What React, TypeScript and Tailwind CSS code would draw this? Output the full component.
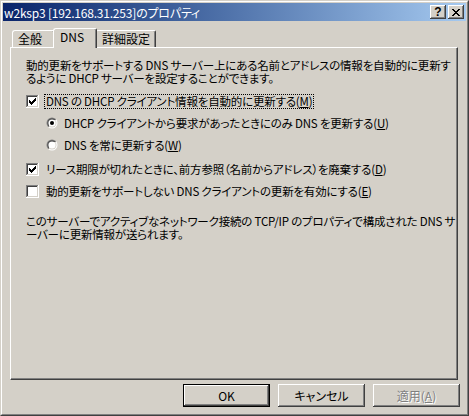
const raised =
  "shadow-[inset_-1px_-1px_#404040,inset_1px_1px_#ffffff,inset_-2px_-2px_#808080,inset_2px_2px_#d4d0c8]";

function CheckBox({ checked }: { checked?: boolean }) {
  const px = [
    [6, 0], [5, 1], [6, 1], [0, 2], [4, 2], [5, 2], [6, 2],
    [0, 3], [1, 3], [3, 3], [4, 3], [5, 3], [0, 4], [1, 4], [2, 4], [3, 4], [4, 4],
    [1, 5], [2, 5], [3, 5], [2, 6],
  ];
  return (
    <svg width="13" height="13" shapeRendering="crispEdges" className="shrink-0">
      <rect x="0" y="0" width="13" height="13" fill="#ffffff" />
      <rect x="0" y="0" width="12" height="1" fill="#808080" />
      <rect x="0" y="0" width="1" height="12" fill="#808080" />
      <rect x="1" y="1" width="10" height="1" fill="#404040" />
      <rect x="1" y="1" width="1" height="10" fill="#404040" />
      <rect x="1" y="11" width="11" height="1" fill="#d4d0c8" />
      <rect x="11" y="1" width="1" height="11" fill="#d4d0c8" />
      {checked && px.map(([x, y]) => <rect key={`${x}-${y}`} x={x + 3} y={y + 3} width="1" height="1" fill="#000" />)}
    </svg>
  );
}

function Radio({ checked, id }: { checked?: boolean; id: string }) {
  return (
    <svg width="12" height="12" className="shrink-0">
      <defs>
        <linearGradient id={`o${id}`} x1="0" y1="0" x2="1" y2="1">
          <stop offset="50%" stopColor="#808080" />
          <stop offset="50%" stopColor="#ffffff" />
        </linearGradient>
        <linearGradient id={`i${id}`} x1="0" y1="0" x2="1" y2="1">
          <stop offset="50%" stopColor="#404040" />
          <stop offset="50%" stopColor="#d4d0c8" />
        </linearGradient>
      </defs>
      <circle cx="6" cy="6" r="5.5" fill={`url(#o${id})`} />
      <circle cx="6" cy="6" r="4.5" fill={`url(#i${id})`} />
      <circle cx="6" cy="6" r="3.6" fill="#ffffff" />
      {checked && <circle cx="6" cy="6" r="2" fill="#000" />}
    </svg>
  );
}

function Btn({ children, def, disabled }: { children: React.ReactNode; def?: boolean; disabled?: boolean }) {
  return (
    <div className={`w-[87px] h-[23px] ${def ? "border border-black" : ""}`}>
      <div
        className={`w-full h-full flex items-center justify-center ${raised} ${
          disabled ? "text-[#808080] [text-shadow:1px_1px_0_#ffffff]" : "text-black"
        }`}
      >
        {children}
      </div>
    </div>
  );
}

export default function App() {
  return (
    <div className="w-[469px] h-[416px] bg-[#d4d0c8] font-['Noto_Sans_CJK_JP',sans-serif] text-[12px] leading-[13px] [font-feature-settings:'palt'] text-black border border-t-[#d4d0c8] border-l-[#d4d0c8] border-r-[#404040] border-b-[#404040]">
      <div className="w-full h-full border border-t-white border-l-white border-r-[#808080] border-b-[#808080] p-px flex flex-col">
        {/* title bar */}
        <div className="h-[18px] flex items-center bg-linear-to-r from-[#0a246a] to-[#a6caf0] pl-[1px] pr-[2px]">
          <span className="text-white whitespace-nowrap flex-1 tracking-[-0.2px]">w2ksp3 [192.168.31.253]のプロパティ</span>
          <div className={`w-[16px] h-[14px] bg-[#d4d0c8] ${raised} flex items-center justify-center text-[12px] font-bold font-['Liberation_Sans',sans-serif] leading-none`}>
            ?
          </div>
          <div className={`ml-[2px] w-[16px] h-[14px] bg-[#d4d0c8] ${raised} flex items-center justify-center`}>
            <svg width="8" height="7" shapeRendering="crispEdges">
              <path d="M0 0h2v1h-2zM6 0h2v1h-2zM1 1h2v1h-2zM5 1h2v1h-2zM2 2h4v1h-4zM3 3h2v1h-2zM2 4h4v1h-4zM1 5h2v1h-2zM5 5h2v1h-2zM0 6h2v1h-2zM6 6h2v1h-2z" fill="#000" />
            </svg>
          </div>
        </div>

        {/* tabs */}
        <div className="flex items-end h-[19px] mt-[7px] ml-[9px]">
          <div className="w-[43px] h-[17px] border-t border-l border-white border-r border-r-[#404040] rounded-tl-[3px] rounded-tr-[2px] shadow-[inset_-1px_0_#808080] pl-[5px] pt-[1px] whitespace-nowrap">
            全般
          </div>
          <div className="relative z-10 -mx-[2px] -mb-px w-[44px] h-[20px] bg-[#d4d0c8] border-t border-l border-white border-r border-r-[#404040] rounded-tl-[3px] rounded-tr-[2px] shadow-[inset_-1px_0_#808080] pl-[6px] pt-[1px] whitespace-nowrap">
            DNS
          </div>
          <div className="w-[61px] h-[17px] border-t border-l border-white border-r border-r-[#404040] rounded-tl-[3px] rounded-tr-[2px] shadow-[inset_-1px_0_#808080] pl-[6px] pt-[1px] whitespace-nowrap">
            詳細設定
          </div>
        </div>

        {/* panel */}
        <div className="ml-[7px] w-[448px] h-[333px] border border-t-white border-l-white border-r-[#404040] border-b-[#404040] shadow-[inset_-1px_-1px_#808080] pl-[15px] pt-[11px] flex flex-col whitespace-nowrap text-[11.5px] tracking-[-0.2px]">
          <p>
            動的更新をサポートする DNS サーバー上にある名前とアドレスの情報を自動的に更新す
            <br />
            るように DHCP サーバーを設定することができます。
          </p>

          <div className="mt-[8px] h-[16px] flex items-center">
            <CheckBox checked />
            <span className="ml-[5px] border border-dotted border-black px-px leading-[13px]">
              DNS の DHCP クライアント情報を自動的に更新する(<u>M</u>)
            </span>
          </div>

          <div className="mt-[6px] h-[16px] flex items-center pl-[20px]">
            <Radio checked id="a" />
            <span className="ml-[4px] px-[2px]">
              DHCP クライアントから要求があったときにのみ DNS を更新する(<u>U</u>)
            </span>
          </div>

          <div className="mt-[6px] h-[16px] flex items-center pl-[20px]">
            <Radio id="b" />
            <span className="ml-[4px] px-[2px]">
              DNS を常に更新する(<u>W</u>)
            </span>
          </div>

          <div className="mt-[8px] h-[16px] flex items-center">
            <CheckBox checked />
            <span className="ml-[5px] px-[2px]">
              リース期限が切れたときに、前方参照（名前からアドレス）を廃棄する(<u>D</u>)
            </span>
          </div>

          <div className="mt-[6px] h-[16px] flex items-center">
            <CheckBox />
            <span className="ml-[5px] px-[2px]">
              動的更新をサポートしない DNS クライアントの更新を有効にする(<u>E</u>)
            </span>
          </div>

          <p className="mt-[16px]">
            このサーバーでアクティブなネットワーク接続の TCP/IP のプロパティで構成された DNS サ
            <br />
            ーバーに更新情報が送られます。
          </p>
        </div>

        {/* buttons */}
        <div className="mt-[4px] flex justify-end gap-[8px] pr-[6px]">
          <Btn def>OK</Btn>
          <Btn>キャンセル</Btn>
          <Btn disabled>
            適用(<u>A</u>)
          </Btn>
        </div>
      </div>
    </div>
  );
}
